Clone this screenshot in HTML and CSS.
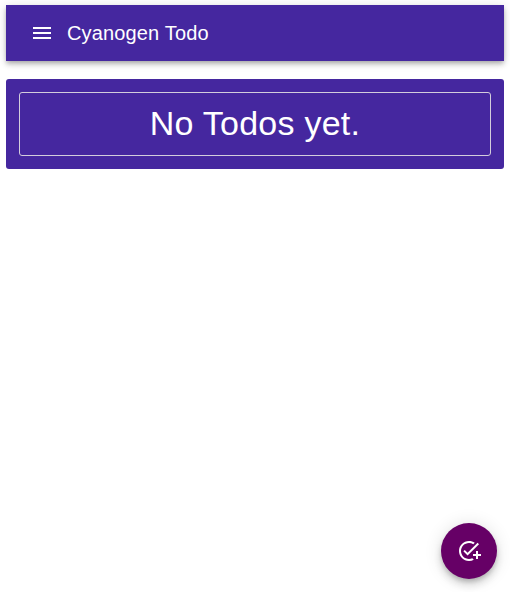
FILE: index.html
```html
<!DOCTYPE html>
<html lang="en">
<head>
<meta charset="utf-8">
<title>Cyanogen Todo</title>
<link rel="stylesheet" href="styles.css">
</head>
<body>
<header class="app-bar">
  <button class="menu-button" aria-label="Menu">
    <svg class="icon" viewBox="0 0 24 24"><path d="M3 18h18v-2H3v2zm0-5h18v-2H3v2zm0-7v2h18V6H3z"/></svg>
  </button>
  <h1 class="title">Cyanogen Todo</h1>
</header>
<main class="card">
  <div class="empty">No Todos yet.</div>
</main>
<button class="fab" aria-label="Add todo">
  <svg class="icon" viewBox="0 0 24 24"><path d="M22 5.18 10.59 16.6l-4.24-4.24 1.41-1.41 2.83 2.83 10-10L22 5.18zM12 20c-4.41 0-8-3.59-8-8s3.59-8 8-8c1.57 0 3.04.46 4.28 1.25l1.45-1.45C16.1 2.67 14.13 2 12 2 6.48 2 2 6.48 2 12s4.48 10 10 10c1.73 0 3.36-.44 4.78-1.22l-1.5-1.5c-1 .46-2.11.72-3.28.72zm7-5h-3v2h3v3h2v-3h3v-2h-3v-3h-2v3z"/></svg>
</button>
</body>
</html>
```
FILE: styles.css
```css
* {
  box-sizing: border-box;
}

body {
  margin: 0;
  padding: 5px 6px;
  background: #fff;
  color: #fff;
  font-family: "Liberation Sans", Arial, sans-serif;
}

button {
  display: flex;
  align-items: center;
  justify-content: center;
  border: 0;
  padding: 0;
  color: inherit;
}

.icon {
  display: block;
  width: 24px;
  height: 24px;
  fill: currentColor;
}

.app-bar {
  display: flex;
  align-items: center;
  gap: 13px;
  height: 56px;
  padding: 0 24px;
  background: #45279f;
  box-shadow: 0 2px 4px -1px rgba(0, 0, 0, 0.2), 0 4px 5px rgba(0, 0, 0, 0.14), 0 1px 10px rgba(0, 0, 0, 0.12);
}

.menu-button {
  background: none;
}

.title {
  margin: 0;
  font-size: 20px;
  font-weight: 400;
  line-height: 32px;
  letter-spacing: 0.0075em;
}

.card {
  margin-top: 18px;
  padding: 13px;
  border-radius: 3px;
  background: #45279f;
}

.empty {
  height: 64px;
  border: 1px solid #d3cddc;
  border-radius: 3px;
  font-size: 34px;
  line-height: 60px;
  letter-spacing: 0.00735em;
  text-align: center;
}

.fab {
  position: fixed;
  right: 13px;
  bottom: 13px;
  width: 56px;
  height: 56px;
  border-radius: 50%;
  background: #660066;
  box-shadow: 0 3px 5px -1px rgba(0, 0, 0, 0.2), 0 6px 10px rgba(0, 0, 0, 0.14), 0 1px 18px rgba(0, 0, 0, 0.12);
}
```
